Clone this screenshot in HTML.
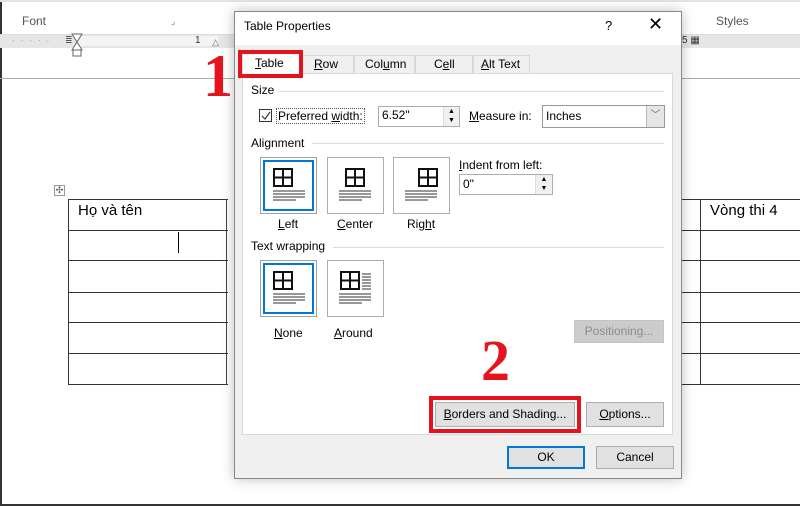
<!DOCTYPE html>
<html><head><meta charset="utf-8"><style>
*{margin:0;padding:0;box-sizing:border-box}
body{width:800px;height:507px;position:relative;overflow:hidden;background:#fff;font-family:"Segoe UI","Liberation Sans",sans-serif;font-size:12px;color:#000}
.a{position:absolute}
.t{position:absolute;white-space:nowrap}
.btn{position:absolute;background:#e1e1e1;border:1px solid #adadad;text-align:center;font-size:12px;line-height:20px}
.box{position:absolute;border:1px solid #adadad;background:#fff}
.sel{border:1px solid #a0a0a0;box-shadow:inset 0 0 0 2px #fff,inset 0 0 0 4px #0078d7}
u{text-decoration:underline}
.hr{position:absolute;height:1px;background:#dcdcdc}
.red{position:absolute;color:#e3141e;font-family:"Liberation Serif",serif;font-weight:bold}
</style></head><body>
<div class="a" style="left:0;top:0;width:800px;height:506px;border-left:2px solid #333;border-bottom:2px solid #333"></div>
<div class="a" style="left:0;top:0;width:800px;height:2px;background:#dfe3ea"></div>
<div class="t" style="left:22px;top:14px;color:#555;font-size:12px">Font</div>
<div class="t" style="left:171px;top:16px;color:#777;font-size:9px">⌟</div>
<div class="t" style="left:716px;top:14px;color:#555;font-size:12px">Styles</div>
<div class="a" style="left:0;top:34px;width:800px;height:14px;background:#e6e6e6;border-top:1px solid #ddd"></div>
<div class="a" style="left:78px;top:36px;width:140px;height:10px;background:#f4f4f4"></div>
<div class="t" style="left:12px;top:36px;color:#999;font-size:8px;letter-spacing:6px">·····</div>
<div class="t" style="left:65px;top:35px;color:#555;font-size:9px">≣</div>
<svg class="a" style="left:71px;top:33px" width="12" height="24"><path d="M1 1H11L6 9L11 17H1L6 9Z" fill="#fff" stroke="#666"/><rect x="2" y="17" width="8" height="6" fill="#fff" stroke="#666"/></svg>
<div class="t" style="left:195px;top:35px;color:#333;font-size:10px">1</div>
<div class="t" style="left:212px;top:37px;color:#666;font-size:9px">△</div>
<div class="t" style="left:682px;top:35px;color:#333;font-size:10px">5 ▦</div>
<div class="a" style="left:0;top:78px;width:800px;height:1px;background:#aaa"></div>

<div class="t" style="left:54px;top:185px;width:11px;height:11px;border:1px solid #999;font-size:9px;line-height:9px;text-align:center;color:#555">✣</div>
<div class="a" style="left:68px;top:199px;width:160px;height:186px;border:1px solid #333;border-right:none"></div>
<div class="a" style="left:226px;top:199px;width:1px;height:186px;background:#444"></div>
<div class="a" style="left:681px;top:199px;width:119px;height:186px;border-top:1px solid #333;border-bottom:1px solid #333"></div>
<div class="a" style="left:700px;top:199px;width:1px;height:186px;background:#333"></div>
<div class="a" style="left:68px;top:230px;width:160px;height:1px;background:#333"></div>
<div class="a" style="left:68px;top:260px;width:160px;height:1px;background:#333"></div>
<div class="a" style="left:68px;top:292px;width:160px;height:1px;background:#333"></div>
<div class="a" style="left:68px;top:322px;width:160px;height:1px;background:#333"></div>
<div class="a" style="left:68px;top:353px;width:160px;height:1px;background:#333"></div>
<div class="a" style="left:681px;top:230px;width:119px;height:1px;background:#333"></div>
<div class="a" style="left:681px;top:260px;width:119px;height:1px;background:#333"></div>
<div class="a" style="left:681px;top:292px;width:119px;height:1px;background:#333"></div>
<div class="a" style="left:681px;top:322px;width:119px;height:1px;background:#333"></div>
<div class="a" style="left:681px;top:353px;width:119px;height:1px;background:#333"></div>
<div class="a" style="left:178px;top:232px;width:1px;height:21px;background:#000"></div>
<div class="t" style="left:78px;top:202px;font-family:'Liberation Sans',sans-serif;font-size:15px">Họ và tên</div>
<div class="t" style="left:710px;top:202px;font-family:'Liberation Sans',sans-serif;font-size:15px">Vòng thi 4</div>

<div class="a" style="left:234px;top:11px;width:448px;height:468px;background:#f0f0f0;border:1px solid #888;box-shadow:0 0 12px rgba(0,0,0,.25)"></div>
<div class="a" style="left:235px;top:12px;width:446px;height:33px;background:#fff"></div>
<div class="t" style="left:244px;top:19px;font-size:12px">Table Properties</div>
<div class="t" style="left:605px;top:18px;font-size:13px">?</div>
<div class="t" style="left:648px;top:14px;font-size:18px;font-weight:300">✕</div>

<div class="a" style="left:242px;top:73px;width:431px;height:362px;background:#fff;border:1px solid #d9d9d9"></div>
<div class="a" style="left:242px;top:53px;width:58px;height:21px;background:#fff;border:1px solid #d9d9d9;border-bottom:none"></div>
<div class="a" style="left:300px;top:55px;width:54px;height:18px;border:1px solid #d9d9d9;border-bottom:none"></div>
<div class="a" style="left:354px;top:55px;width:61px;height:18px;border:1px solid #d9d9d9;border-bottom:none"></div>
<div class="a" style="left:415px;top:55px;width:58px;height:18px;border:1px solid #d9d9d9;border-bottom:none"></div>
<div class="a" style="left:473px;top:55px;width:57px;height:18px;border:1px solid #d9d9d9;border-bottom:none"></div>
<div class="t" style="left:255px;top:56px"><u>T</u>able</div>
<div class="t" style="left:314px;top:57px"><u>R</u>ow</div>
<div class="t" style="left:365px;top:57px">Col<u>u</u>mn</div>
<div class="t" style="left:434px;top:57px">C<u>e</u>ll</div>
<div class="t" style="left:481px;top:57px"><u>A</u>lt Text</div>
<div class="a" style="left:238px;top:50px;width:65px;height:28px;border:4px solid #e3141e"></div>
<div class="red" style="left:203px;top:44px;font-size:60px;line-height:64px">1</div>

<div class="t" style="left:251px;top:83px">Size</div>
<div class="hr" style="left:278px;top:91px;width:386px"></div>
<div class="a" style="left:259px;top:109px;width:13px;height:13px;border:1px solid #333;background:#fff"></div>
<svg class="a" style="left:260px;top:110px" width="12" height="12"><path d="M2 6 L5 9 L10 2" stroke="#333" fill="none" stroke-width="1.2"/></svg>
<div class="t" style="left:276px;top:108px;border:1px dotted #555;padding:0 1px">Preferred <u>w</u>idth:</div>
<div class="box" style="left:378px;top:106px;width:82px;height:21px"></div>
<div class="t" style="left:382px;top:108px">6.52"</div>
<div class="a" style="left:443px;top:107px;width:16px;height:19px;background:#f0f0f0;border-left:1px solid #ddd;font-size:7px;line-height:9px;text-align:center">▲<br>▼</div>
<div class="t" style="left:469px;top:109px"><u>M</u>easure in:</div>
<div class="box" style="left:542px;top:105px;width:123px;height:23px;border-color:#999"></div>
<div class="t" style="left:546px;top:109px">Inches</div>
<div class="a" style="left:646px;top:106px;width:18px;height:21px;background:#e5e5e5;border-left:1px solid #bbb;text-align:center;font-size:10px;color:#666;line-height:20px">﹀</div>

<div class="t" style="left:251px;top:136px">Alignment</div>
<div class="hr" style="left:312px;top:143px;width:352px"></div>
<div class="box sel" style="left:260px;top:157px;width:57px;height:57px"></div>
<div class="box" style="left:327px;top:157px;width:57px;height:57px"></div>
<div class="box" style="left:393px;top:157px;width:57px;height:57px"></div>
<div class="t" style="left:278px;top:217px"><u>L</u>eft</div>
<div class="t" style="left:337px;top:217px"><u>C</u>enter</div>
<div class="t" style="left:407px;top:217px">Rig<u>h</u>t</div>
<div class="t" style="left:459px;top:158px"><u>I</u>ndent from left:</div>
<div class="box" style="left:459px;top:174px;width:94px;height:21px"></div>
<div class="t" style="left:463px;top:177px">0"</div>
<div class="a" style="left:535px;top:175px;width:17px;height:19px;background:#f0f0f0;border-left:1px solid #ddd;font-size:7px;line-height:9px;text-align:center">▲<br>▼</div>

<div class="t" style="left:251px;top:239px">Text wrapping</div>
<div class="hr" style="left:333px;top:247px;width:331px"></div>
<div class="box sel" style="left:260px;top:260px;width:57px;height:57px"></div>
<div class="box" style="left:327px;top:260px;width:57px;height:57px"></div>
<div class="t" style="left:274px;top:326px"><u>N</u>one</div>
<div class="t" style="left:334px;top:326px"><u>A</u>round</div>

<svg class="a" style="left:0;top:0" width="800" height="507">
<g fill="none" stroke="#111" stroke-width="2">
<rect x="274" y="169" width="18" height="17"/><path d="M283 169V186M274 177.5H292"/>
<rect x="346" y="169" width="18" height="17"/><path d="M355 169V186M346 177.5H364"/>
<rect x="419" y="169" width="18" height="17"/><path d="M428 169V186M419 177.5H437"/>
<rect x="274" y="272" width="18" height="17"/><path d="M283 272V289M274 280.5H292"/>
<rect x="341" y="272" width="18" height="17"/><path d="M350 272V289M341 280.5H359"/>
</g>
<g stroke="#777" stroke-width="1.6">
<path d="M273 191H305M273 194H305M273 197H305M273 200H296"/>
<path d="M339 191H371M339 194H371M339 197H371M339 200H362"/>
<path d="M405 191H437M405 194H437M405 197H437M405 200H428"/>
<path d="M273 294H305M273 297H305M273 300H305M273 303H296"/>
<path d="M339 294H371M339 297H371M339 300H371M339 303H362"/>
<path d="M362 274H371M362 277H371M362 280H371M362 283H371M362 286H371M362 289H371"/>
</g>
</svg>

<div class="btn" style="left:574px;top:320px;width:90px;height:23px;background:#cccccc;border-color:#c4c4c4;color:#8c8c8c">Positioning...</div>

<div class="red" style="left:481px;top:331px;font-size:58px;line-height:60px">2</div>
<div class="a" style="left:429px;top:396px;width:152px;height:37px;border:4px solid #e3141e"></div>
<div class="btn" style="left:435px;top:402px;width:140px;height:25px;line-height:23px"><u>B</u>orders and Shading...</div>
<div class="btn" style="left:586px;top:402px;width:78px;height:25px;line-height:23px"><u>O</u>ptions...</div>

<div class="btn" style="left:507px;top:446px;width:78px;height:23px;border:2px solid #0078d7;line-height:19px">OK</div>
<div class="btn" style="left:596px;top:446px;width:78px;height:23px;line-height:21px">Cancel</div>
</body></html>
